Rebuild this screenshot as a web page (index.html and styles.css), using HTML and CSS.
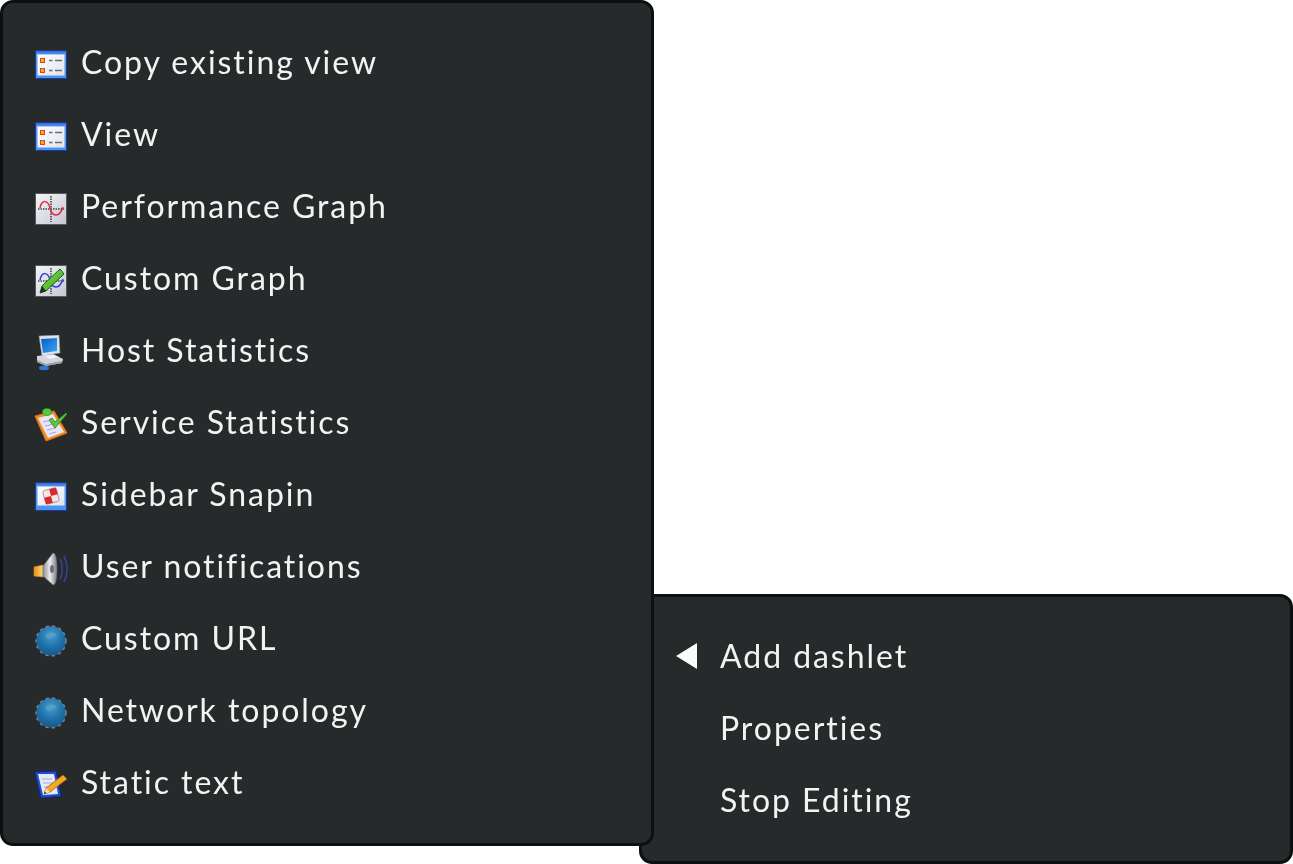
FILE: index.html
```html
<!DOCTYPE html>
<html lang="en">
<head>
<meta charset="utf-8">
<title>Add dashlet</title>
<link rel="stylesheet" href="styles.css">
</head>
<body>
<svg class="defs" width="0" height="0" aria-hidden="true">
  <defs>
    <linearGradient id="winBlue" x1="0" y1="0" x2="0" y2="1"><stop offset="0" stop-color="#2a62d0"/><stop offset=".15" stop-color="#5c9cf0"/><stop offset="1" stop-color="#4a94f0"/></linearGradient>
    <linearGradient id="paper" x1="0" y1="0" x2="1" y2="1"><stop offset="0" stop-color="#ffffff"/><stop offset="1" stop-color="#dfe3ec"/></linearGradient>
    <linearGradient id="graphBg" x1="0" y1="0" x2="1" y2="1"><stop offset="0" stop-color="#f4f4f8"/><stop offset="1" stop-color="#c6c6d2"/></linearGradient>
    <linearGradient id="green" x1="0" y1="0" x2="1" y2="1"><stop offset="0" stop-color="#9ae850"/><stop offset="1" stop-color="#1f9a1f"/></linearGradient>
    <linearGradient id="screen" x1="0" y1="0" x2="1" y2="1"><stop offset="0" stop-color="#0a5cc8"/><stop offset="1" stop-color="#39a6f2"/></linearGradient>
    <linearGradient id="horn" x1="0" y1="0" x2="1" y2="0"><stop offset="0" stop-color="#f08a10"/><stop offset="1" stop-color="#f6dc80"/></linearGradient>
    <linearGradient id="cone" x1="0" y1="0" x2="1" y2="0"><stop offset="0" stop-color="#8d8d96"/><stop offset=".5" stop-color="#ececf0"/><stop offset="1" stop-color="#77777f"/></linearGradient>
    <radialGradient id="globe" cx=".5" cy=".3" r=".7"><stop offset="0" stop-color="#4f9cc8"/><stop offset=".55" stop-color="#1f74ac"/><stop offset="1" stop-color="#1a5688"/></radialGradient>
    <symbol id="i-view" viewBox="0 0 32 30">
      <rect x=".5" y=".5" width="31" height="28" rx="1" fill="url(#winBlue)" stroke="#1a3aa0"/>
      <rect x="2.500" y="4.500" width="27" height="21" fill="url(#paper)"/>
      <rect x="5.500" y="8.500" width="4" height="4" fill="#f8b010" stroke="#e0402a"/>
      <rect x="5.500" y="18.500" width="4" height="4" fill="#f8b010" stroke="#e0402a"/>
      <path d="M14 10.500h3.500M20 10.500h7M14 20.500h3.500M20 20.500h7" stroke="#6a6d74" stroke-width="1.600"/>
    </symbol>
    <symbol id="i-perf" viewBox="0 0 32 32">
      <rect x=".5" y=".5" width="31" height="31" fill="url(#graphBg)" stroke="#55585c"/>
      <path d="M3 16h26M16 3v26" stroke="#44474b" stroke-width="1.600" stroke-dasharray="1.500 1"/>
      <path d="M5 15C7 6 13 7 15 15S24 26 28 14" fill="none" stroke="#e02b3a" stroke-width="1.500"/>
    </symbol>
    <symbol id="i-custom" viewBox="0 0 32 32">
      <rect x=".5" y=".5" width="31" height="31" fill="url(#graphBg)" stroke="#55585c"/>
      <path d="M3 16h26M16 3v26" stroke="#44474b" stroke-width="1.600" stroke-dasharray="1.500 1"/>
      <path d="M5 15C7 6 13 7 15 15S24 26 28 14" fill="none" stroke="#3a3ae0" stroke-width="1.500"/>
      <path d="M25 4l4 5L11 26l-6 2 2-7z" fill="url(#green)" stroke="#14601a"/>
      <path d="M5 28l2-7 4 5z" fill="#2a2a22"/>
    </symbol>
    <symbol id="i-host" viewBox="0 0 32 36">
      <path d="M4 1l20-1 1 18-18 3z" fill="#dfe3ec" stroke="#8a8e98" stroke-width=".6"/>
      <path d="M6 4l16-1v13L8 18z" fill="url(#screen)"/>
      <path d="M2 21l16-2 10 5-1 4-16 3-9-4z" fill="#d2d5dc"/>
      <path d="M2 25l9 4 16-3v2l-16 3-9-4z" fill="#9a9da6"/>
      <path d="M9 21l10-1 5 2-9 2z" fill="#f2f3f6"/>
      <ellipse cx="9" cy="33" rx="5" ry="2.200" fill="#2e78d8"/>
    </symbol>
    <symbol id="i-service" viewBox="0 0 34 34">
      <path d="M1 8l19-5 13 22-21 8z" fill="#f0901c" stroke="#e06c16"/>
      <path d="M4 10l15-4 11 18-16 6z" fill="#e8e6f6"/>
      <path d="M9 14l9-2M11 18l9-2M13 22l9-2M15 26l7-2" stroke="#a9a3da" stroke-width="1"/>
      <ellipse cx="13" cy="4" rx="4.500" ry="3.500" fill="#55c83c" stroke="#2f8f22" stroke-width=".6"/>
      <path d="M15 12l3-2 3 4L32 5l1 1-12 14z" fill="#58c840" stroke="#2b7f26" stroke-width=".8"/>
    </symbol>
    <symbol id="i-snapin" viewBox="0 0 32 30">
      <rect x=".5" y=".5" width="31" height="28" rx="1" fill="url(#winBlue)" stroke="#1a3aa0"/>
      <rect x="2.500" y="4.500" width="27" height="19" fill="url(#paper)"/>
      <g transform="rotate(-15 16 14)">
        <rect x="9" y="7" width="14" height="14" rx="2" fill="#f2e6e6" stroke="#8d6a6a" stroke-width=".6"/>
        <path d="M16 7h6a1 1 0 0 1 1 1v6h-7zM9 14h7v7h-6a1 1 0 0 1-1-1z" fill="#d82a2e"/>
      </g>
    </symbol>
    <symbol id="i-notify" viewBox="0 0 36 34">
      <path d="M1 15l9-2v12l-9-1z" fill="url(#horn)" stroke="#e2961c" stroke-width=".6"/>
      <path d="M10 14L20 1c3 0 4 7 4 16s-1 16-4 16L10 24z" fill="url(#cone)" stroke="#6c6c76" stroke-width=".6"/>
      <ellipse cx="19" cy="17" rx="2" ry="4" fill="#6d6d76"/>
      <path d="M27 7c3 6 3 14 0 20M31 4c4 8 4 18 0 26" fill="none" stroke="#34438f" stroke-width="1.800"/>
    </symbol>
    <symbol id="i-globe" viewBox="0 0 32 32">
      <circle cx="16" cy="16" r="14.800" fill="url(#globe)"/>
      <circle cx="16" cy="16" r="15" fill="none" stroke="#7288a0" stroke-width="1.400" stroke-dasharray="3 3.500"/>
      <path d="M10 11c3-4 9-4 12-1-2 3-5 1-7 3s-3 0-5-2z" fill="#5aa6cf" opacity=".6"/>
    </symbol>
    <symbol id="i-text" viewBox="0 0 34 28">
      <path d="M1 1l21-1 5 25-20 2z" fill="#2050d0" stroke="#10289a"/>
      <path d="M4 3l16 0 4 20-15 1z" fill="#e4eaf8"/>
      <path d="M8 8h10M9 12h11M10 16h8M11 20h7" stroke="#9eb0d8" stroke-width="1"/>
      <path d="M29 4l4 4-17 13-6 2 2-6z" fill="#f2a922" stroke="#a85a10" stroke-width=".8"/>
      <path d="M10 23l2-6 4 4z" fill="#f4dcb0"/>
      <path d="M10 23l.8-2.400 1.600 1.600z" fill="#222"/>
    </symbol>
  </defs>
</svg>

<nav class="popup popup-main">
  <ul class="menu">
    <li class="item"><span class="icon"><svg class="ic ic-view"><use href="#i-view"/></svg></span><span class="label">Copy existing view</span></li>
    <li class="item"><span class="icon"><svg class="ic ic-view"><use href="#i-view"/></svg></span><span class="label">View</span></li>
    <li class="item"><span class="icon"><svg class="ic"><use href="#i-perf"/></svg></span><span class="label">Performance Graph</span></li>
    <li class="item"><span class="icon"><svg class="ic"><use href="#i-custom"/></svg></span><span class="label">Custom Graph</span></li>
    <li class="item"><span class="icon"><svg class="ic ic-host"><use href="#i-host"/></svg></span><span class="label">Host Statistics</span></li>
    <li class="item"><span class="icon"><svg class="ic ic-service"><use href="#i-service"/></svg></span><span class="label">Service Statistics</span></li>
    <li class="item"><span class="icon"><svg class="ic ic-view"><use href="#i-snapin"/></svg></span><span class="label">Sidebar Snapin</span></li>
    <li class="item"><span class="icon"><svg class="ic ic-notify"><use href="#i-notify"/></svg></span><span class="label">User notifications</span></li>
    <li class="item"><span class="icon"><svg class="ic"><use href="#i-globe"/></svg></span><span class="label">Custom URL</span></li>
    <li class="item"><span class="icon"><svg class="ic"><use href="#i-globe"/></svg></span><span class="label">Network topology</span></li>
    <li class="item"><span class="icon"><svg class="ic ic-text"><use href="#i-text"/></svg></span><span class="label">Static text</span></li>
  </ul>
</nav>

<nav class="popup popup-side">
  <ul class="menu menu-side">
    <li class="item"><span class="arrow"></span><span class="label">Add dashlet</span></li>
    <li class="item"><span class="arrow arrow-none"></span><span class="label">Properties</span></li>
    <li class="item"><span class="arrow arrow-none"></span><span class="label">Stop Editing</span></li>
  </ul>
</nav>
</body>
</html>
```
FILE: styles.css
```css
html, body {
  margin: 0;
  padding: 0;
  height: 100%;
  background: #ffffff;
  overflow: hidden;
}

body {
  position: relative;
  font-family: Lato, "Liberation Sans", sans-serif;
}

.defs {
  position: absolute;
}

.popup {
  position: absolute;
  box-sizing: border-box;
  width: 654px;
  background: #262a2b;
  border: 3px solid #0d1011;
  border-radius: 13px;
}

.popup-main {
  left: 0;
  top: 0;
  height: 846px;
  z-index: 2;
}

.popup-side {
  left: 639px;
  top: 594px;
  height: 270px;
  z-index: 1;
}

.menu {
  list-style: none;
  margin: 0;
  padding: 24px 0 0 32px;
}

.menu-side {
  padding: 24px 0 0 34px;
}

.item {
  display: flex;
  align-items: center;
  height: 72px;
  color: #f2f3f3;
  font-size: 32px;
  letter-spacing: 1.95px;
  white-space: nowrap;
}

.label {
  margin-bottom: 4px;
  filter: blur(0.3px);
}

.icon {
  display: flex;
  align-items: center;
  justify-content: center;
  width: 32px;
  height: 36px;
  margin-top: 3px;
  margin-right: 14px;
  flex: none;
}

.ic {
  display: block;
  flex: none;
  width: 32px;
  height: 32px;
  filter: blur(0.45px);
}

.ic-view {
  height: 30px;
}

.ic-host {
  height: 36px;
}

.ic-service {
  width: 34px;
  height: 34px;
}

.ic-notify {
  width: 36px;
  height: 34px;
}

.ic-text {
  width: 34px;
  height: 28px;
}

.arrow {
  flex: none;
  width: 0;
  height: 0;
  margin-bottom: 3px;
  margin-right: 23px;
  border-style: solid;
  border-width: 13px 21px 13px 0;
  border-color: transparent #fbfbfb transparent transparent;
}

.arrow-none {
  border-color: transparent;
}
```
